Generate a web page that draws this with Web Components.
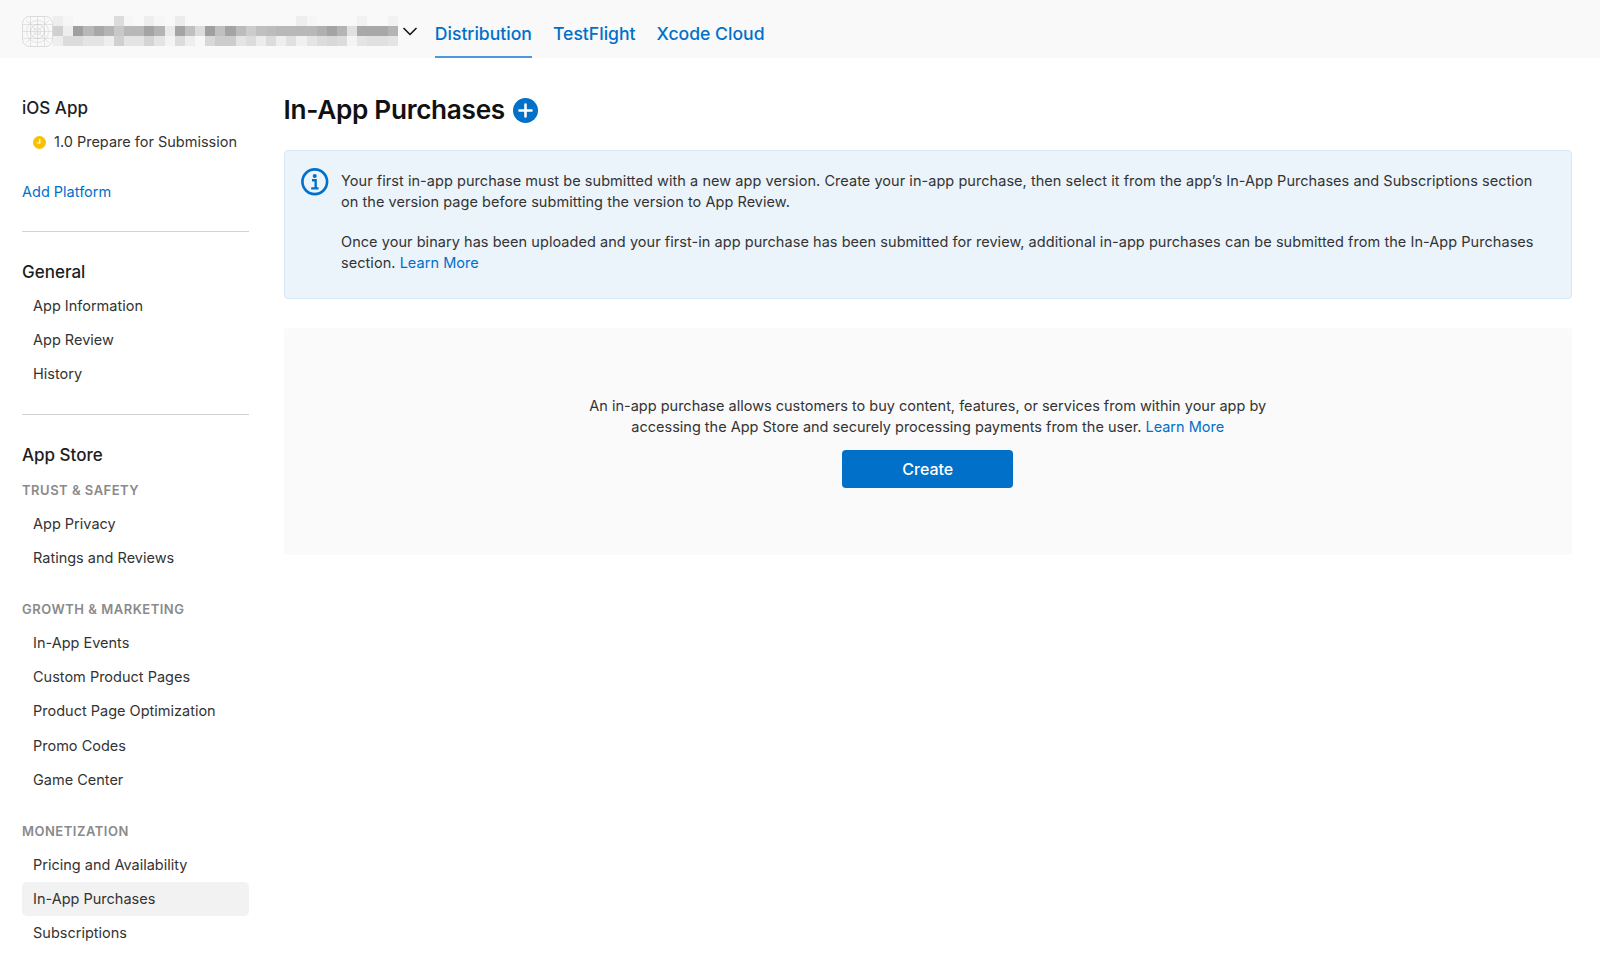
<!DOCTYPE html>
<html lang="en">
<head>
<meta charset="utf-8">
<title>In-App Purchases</title>
<style>
    html, body { margin: 0; padding: 0; background: #fff; }
    body { font-family: Inter, "Liberation Sans", sans-serif; color: #333; height: 971px; overflow: hidden; }
</style>
</head>
<body>
<app-shell>
    <app-header slot="header">
        <app-tab active>Distribution</app-tab>
        <app-tab>TestFlight</app-tab>
        <app-tab>Xcode Cloud</app-tab>
    </app-header>
    <side-bar slot="side">
        <nav-heading>iOS App</nav-heading>
        <nav-item status>1.0 Prepare for Submission</nav-item>
        <nav-link>Add Platform</nav-link>
        <nav-rule tight></nav-rule>
        <nav-heading>General</nav-heading>
        <nav-item>App Information</nav-item>
        <nav-item>App Review</nav-item>
        <nav-item>History</nav-item>
        <nav-rule></nav-rule>
        <nav-heading>App Store</nav-heading>
        <nav-label first>TRUST &amp; SAFETY</nav-label>
        <nav-item>App Privacy</nav-item>
        <nav-item>Ratings and Reviews</nav-item>
        <nav-label>GROWTH &amp; MARKETING</nav-label>
        <nav-item>In-App Events</nav-item>
        <nav-item>Custom Product Pages</nav-item>
        <nav-item>Product Page Optimization</nav-item>
        <nav-item>Promo Codes</nav-item>
        <nav-item>Game Center</nav-item>
        <nav-label>MONETIZATION</nav-label>
        <nav-item>Pricing and Availability</nav-item>
        <nav-item active>In-App Purchases</nav-item>
        <nav-item>Subscriptions</nav-item>
    </side-bar>
    <page-title slot="main">In-App Purchases</page-title>
    <info-banner slot="main">
        <p>Your first in-app purchase must be submitted with a new app version. Create your in-app purchase, then select it from the app’s In-App Purchases and Subscriptions section on the version page before submitting the version to App Review.</p>
        <p>Once your binary has been uploaded and your first-in app purchase has been submitted for review, additional in-app purchases can be submitted from the In-App Purchases section. <text-link>Learn More</text-link></p>
    </info-banner>
    <empty-state slot="main">
        An in-app purchase allows customers to buy content, features, or services from within your app by<br>accessing the App Store and securely processing payments from the user. <text-link>Learn More</text-link>
    </empty-state>
</app-shell>

<script>
// small helper, every element just sets its own shadow markup
function shadow(el, html) {
    el.attachShadow({ mode: 'open' }).innerHTML = html;
}

class AppShell extends HTMLElement {
    constructor() {
        super();
        shadow(this, `
        <style>
            :host { display: block; }
            div.body { display: grid; grid-template-columns: 227px 1fr; column-gap: 34.5px; padding: 0 28px 0 22px; }
            div.main { padding-top: 34px; min-width: 0; }
        </style>
        <slot name="header"></slot>
        <div class="body">
            <div><slot name="side"></slot></div>
            <div class="main"><slot name="main"></slot></div>
        </div>`);
    }
}
customElements.define('app-shell', AppShell);

class AppIcon extends HTMLElement {
    constructor() {
        super();
        shadow(this, `
        <style>
            :host { display: block; width: 31px; height: 31px; flex: none; }
            svg { display: block; }
        </style>
        <svg width="31" height="31" viewBox="0 0 31 31" fill="none" stroke="#d4d4d4" stroke-width=".6">
            <rect x=".5" y=".5" width="30" height="30" rx="7" stroke="#c8c8c8"/>
            <path d="M15.5 .5v30M.5 15.5h30M4 4l23 23M27 4L4 27M8.5 .5v30M22.5 .5v30M.5 8.5h30M.5 22.5h30"/>
            <circle cx="15.5" cy="15.5" r="11"/>
            <circle cx="15.5" cy="15.5" r="7" stroke="#c4c4c4"/>
            <circle cx="15.5" cy="15.5" r="3.5"/>
        </svg>`);
    }
}
customElements.define('app-icon', AppIcon);

// blurred out app name, drawn as blocks
class NameMosaic extends HTMLElement {
    constructor() {
        super();
        const rows = [
            'ee f6 .. .. .. .. dc f6 .. ee f6 .. ec .. .. .. .. .. .. .. .. .. .. .. ee f6 .. .. .. .. f2 .. .. f2',
            'd0 ee a0 b8 a8 b4 c8 b8 b8 a4 b4 ea a4 c0 dc a0 c0 a4 bc cc c0 bc b8 b8 b8 b8 b0 a4 b4 e0 a8 a8 a8 b4',
            'ee dc dc e4 e4 ee d0 e4 e4 d4 e4 f4 dc ee f8 d8 cc cc e4 dc ec dc ee e0 f0 e4 dc d8 dc f4 e4 e0 e0 e4'
        ];
        let cells = '';
        rows.forEach(row => {
            row.split(' ').forEach(c => {
                cells += c == '..' ? '<i></i>' : `<i style="background:#${c}${c}${c}"></i>`;
            });
        });
        shadow(this, `
        <style>
            :host { display: grid; grid-template-columns: repeat(34, 10.15px); grid-auto-rows: 10px; flex: none; }
        </style>${cells}`);
    }
}
customElements.define('name-mosaic', NameMosaic);

class AppHeader extends HTMLElement {
    constructor() {
        super();
        shadow(this, `
        <style>
            :host { display: flex; align-items: stretch; height: 58px; background: #f9f9f9; padding-left: 22px; box-sizing: border-box; }
            div.app { display: flex; align-items: center; height: 62px; }
            svg { display: block; margin-left: 5px; flex: none; }
            nav { display: flex; gap: 21px; margin-left: 18px; }
        </style>
        <div class="app">
            <app-icon></app-icon>
            <name-mosaic></name-mosaic>
            <svg width="14" height="9" viewBox="0 0 14 9" fill="none" stroke="#1d1d1f" stroke-width="1.7" stroke-linecap="round" stroke-linejoin="round"><path d="M1 1.5l6 6 6-6"/></svg>
        </div>
        <nav><slot></slot></nav>`);
    }
}
customElements.define('app-header', AppHeader);

class AppTab extends HTMLElement {
    constructor() {
        super();
        shadow(this, `
        <style>
            :host { display: block; height: 58px; box-sizing: border-box; padding-top: 22px; line-height: 24px; font-size: 17.6px; font-weight: 500; color: #0070c9; white-space: nowrap; }
            :host([active]) { border-bottom: 2px solid #4a97e2; }
        </style>
        <slot></slot>`);
    }
}
customElements.define('app-tab', AppTab);

class SideBar extends HTMLElement {
    constructor() {
        super();
        shadow(this, `
        <style>
            :host { display: block; padding-top: 38px; }
        </style>
        <slot></slot>`);
    }
}
customElements.define('side-bar', SideBar);

class NavHeading extends HTMLElement {
    constructor() {
        super();
        shadow(this, `
        <style>
            :host { display: block; font-size: 17px; line-height: 24px; font-weight: 500; color: #1d1d1f; margin-bottom: 5.5px; }
        </style>
        <slot></slot>`);
    }
}
customElements.define('nav-heading', NavHeading);

class NavLabel extends HTMLElement {
    constructor() {
        super();
        shadow(this, `
        <style>
            :host { display: block; font-size: 13px; line-height: 20px; font-weight: 600; color: #8a8a8a; margin: 24px 0 7px; letter-spacing: .5px; white-space: nowrap; }
            :host([first]) { margin: 13px 0 7px; }
        </style>
        <slot></slot>`);
    }
}
customElements.define('nav-label', NavLabel);

class NavItem extends HTMLElement {
    constructor() {
        super();
        const clock = this.hasAttribute('status') ? `
            <svg width="13" height="13" viewBox="0 0 13 13"><circle cx="6.5" cy="6.5" r="6.5" fill="#f7c000"/><path d="M6.8 3v4H3.6" fill="none" stroke="#fff" stroke-width="1.2"/></svg>` : '';
        shadow(this, `
        <style>
            :host { display: flex; align-items: center; height: 34.2px; box-sizing: border-box; padding: 0 0 1.4px 11px; font-size: 14.5px; color: #333; border-radius: 5px; white-space: nowrap; }
            :host([active]) { background: #f2f2f2; }
            svg { flex: none; margin: 1px 8px 0 0; }
        </style>
        ${clock}<slot></slot>`);
    }
}
customElements.define('nav-item', NavItem);

class NavLink extends HTMLElement {
    constructor() {
        super();
        shadow(this, `
        <style>
            :host { display: flex; align-items: center; height: 34px; box-sizing: border-box; padding-bottom: 1.4px; margin-top: 16px; font-size: 14.5px; color: #0070c9; }
        </style>
        <slot></slot>`);
    }
}
customElements.define('nav-link', NavLink);

class NavRule extends HTMLElement {
    constructor() {
        super();
        shadow(this, `
        <style>
            :host { display: block; height: 1px; background: #d2d2d2; margin: 22px 0 28px; }
            :host([tight]) { margin-top: 21px; }
        </style>`);
    }
}
customElements.define('nav-rule', NavRule);

class PageTitle extends HTMLElement {
    constructor() {
        super();
        shadow(this, `
        <style>
            :host { display: flex; align-items: center; gap: 8px; height: 36px; }
            h1 { margin: 0; font-size: 26.2px; line-height: 36px; font-weight: 600; color: #111; letter-spacing: -.3px; white-space: nowrap; }
            svg { display: block; flex: none; margin-top: 1px; }
        </style>
        <h1><slot></slot></h1>
        <svg width="25" height="25" viewBox="0 0 25 25"><circle cx="12.5" cy="12.5" r="12.5" fill="#0070c9"/><path d="M12.5 6.5v12M6.5 12.5h12" stroke="#fff" stroke-width="2.6" stroke-linecap="round"/></svg>`);
    }
}
customElements.define('page-title', PageTitle);

class InfoBanner extends HTMLElement {
    constructor() {
        super();
        shadow(this, `
        <style>
            :host { display: flex; margin-top: 22px; height: 149px; box-sizing: border-box; padding: 20px 28px 0 16.5px; background: #ebf3fb; border: 1px solid #d6e7f8; border-radius: 4px; font-size: 14.5px; line-height: 20.5px; letter-spacing: .05px; color: #333; }
            svg { display: block; flex: none; margin: -3px 12.5px 0 0; }
            ::slotted(p) { margin: 0 0 20px; }
        </style>
        <svg width="27.5" height="27.5" viewBox="0 0 27 27" fill="none"><circle cx="13.5" cy="13.5" r="12.1" stroke="#0070c9" stroke-width="2.6"/><circle cx="13.5" cy="7.8" r="2" fill="#0070c9"/><path d="M10.8 12h3.6v8M10 20h7.2" stroke="#0070c9" stroke-width="2.3"/></svg>
        <div><slot></slot></div>`);
    }
}
customElements.define('info-banner', InfoBanner);

class EmptyState extends HTMLElement {
    constructor() {
        super();
        shadow(this, `
        <style>
            :host { display: flex; flex-direction: column; align-items: center; margin-top: 29px; height: 227px; box-sizing: border-box; padding-top: 68px; background: #fafafa; border-radius: 4px; font-size: 14.5px; line-height: 20.5px; color: #333; text-align: center; }
            button { display: block; margin-top: 12.5px; width: 171px; height: 38px; border: 0; border-radius: 4px; background: #0070c9; color: #fff; font: 500 16px Inter, "Liberation Sans", sans-serif; }
        </style>
        <div><slot></slot></div>
        <button>Create</button>`);
    }
}
customElements.define('empty-state', EmptyState);

class TextLink extends HTMLElement {
    constructor() {
        super();
        shadow(this, `
        <style>
            :host { display: inline; color: #0070c9; }
        </style>
        <slot></slot>`);
    }
}
customElements.define('text-link', TextLink);
</script>
</body>
</html>
